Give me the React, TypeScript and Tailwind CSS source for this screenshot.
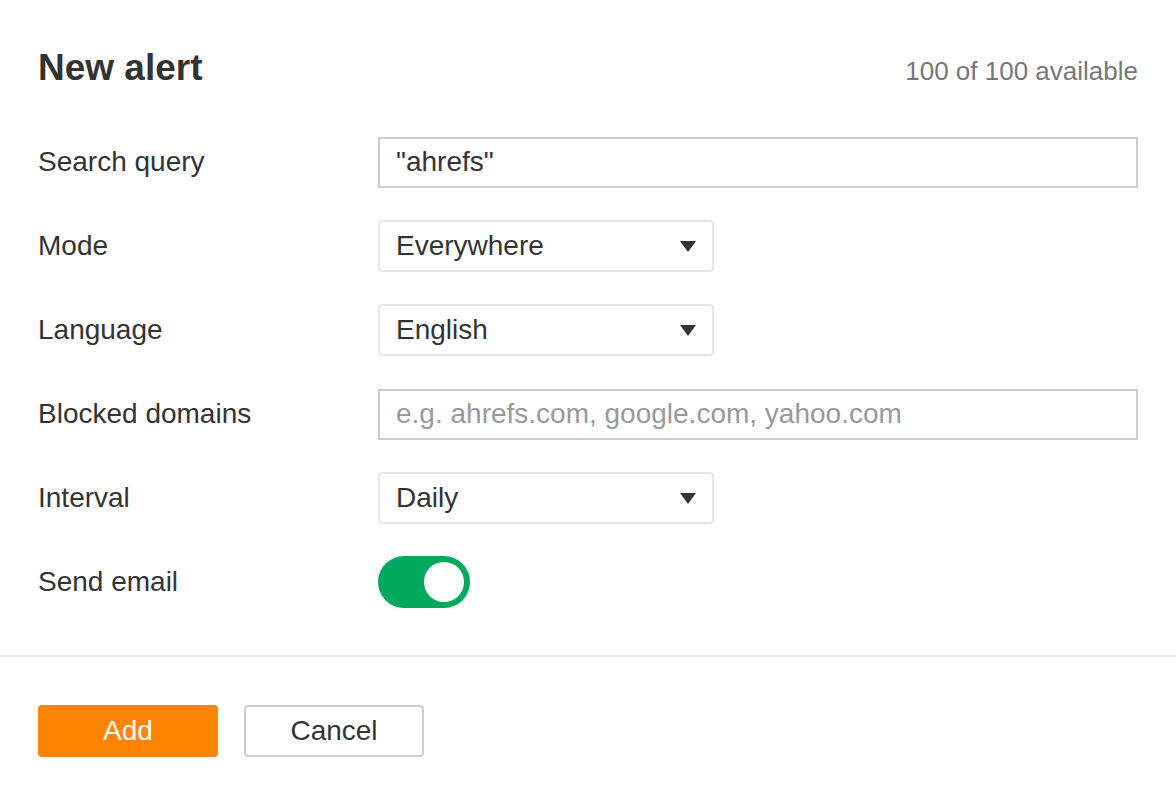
import React from "react";

const font = { fontFamily: '"Liberation Sans", Arial, sans-serif' };

const Caret = () => (
    <svg width="16" height="11" viewBox="0 0 16 11" className="shrink-0">
        <path d="M0 0 H16 L8 11 Z" fill="#333" />
    </svg>
);

const Select = ({ value }: { value: string }) => (
    <div className="flex h-[52px] w-[336px] items-center justify-between rounded-[4px] border-2 border-[#e6e6e6] bg-white pl-[16px] pr-[16px]">
        <span className="text-[28px] text-[#333]">{value}</span>
        <Caret />
    </div>
);

const Row = ({ label, children }: { label: string; children: React.ReactNode }) => (
    <div className="flex h-[52px] items-center">
        <div className="w-[340px] shrink-0 text-[28px] text-[#333]">{label}</div>
        <div className="flex flex-1 items-center">{children}</div>
    </div>
);

export default function App() {
    return (
        <div className="h-[797px] w-[1176px] bg-white" style={font}>
            {/* Header */}
            <div className="flex items-baseline justify-between px-[38px] pt-[45px]">
                <h1 className="text-[37px] font-bold leading-[46px] text-[#333]">New alert</h1>
                <span className="text-[26px] text-[#777]">100 of 100 available</span>
            </div>

            {/* Form */}
            <div className="mt-[45px] flex flex-col gap-[32px] px-[38px]">
                <Row label="Search query">
                    <div className="flex h-[51px] w-full items-center border-2 border-[#cccccc] pl-[16px] text-[28px] text-[#333]">
                        "ahrefs"
                    </div>
                </Row>
                <Row label="Mode">
                    <Select value="Everywhere" />
                </Row>
                <Row label="Language">
                    <Select value="English" />
                </Row>
                <Row label="Blocked domains">
                    <div className="flex h-[51px] w-full items-center border-2 border-[#cccccc] pl-[16px] text-[28px] text-[#999]">
                        e.g. ahrefs.com, google.com, yahoo.com
                    </div>
                </Row>
                <Row label="Interval">
                    <Select value="Daily" />
                </Row>
                <Row label="Send email">
                    <div className="flex h-[52px] w-[92px] items-center justify-end rounded-full bg-[#00a95c] pr-[6px]">
                        <div className="h-[40px] w-[40px] rounded-full bg-white" />
                    </div>
                </Row>
            </div>

            {/* Footer */}
            <div className="mt-[47px] border-t-2 border-[#e8e8e8]" />
            <div className="flex gap-[26px] px-[38px] pt-[48px]">
                <button className="flex h-[52px] w-[180px] items-center justify-center rounded-[4px] bg-[#ff8500] text-[28px] text-white">
                    Add
                </button>
                <button className="flex h-[52px] w-[180px] items-center justify-center rounded-[4px] border-2 border-[#cccccc] bg-white text-[28px] text-[#333]">
                    Cancel
                </button>
            </div>
        </div>
    );
}
